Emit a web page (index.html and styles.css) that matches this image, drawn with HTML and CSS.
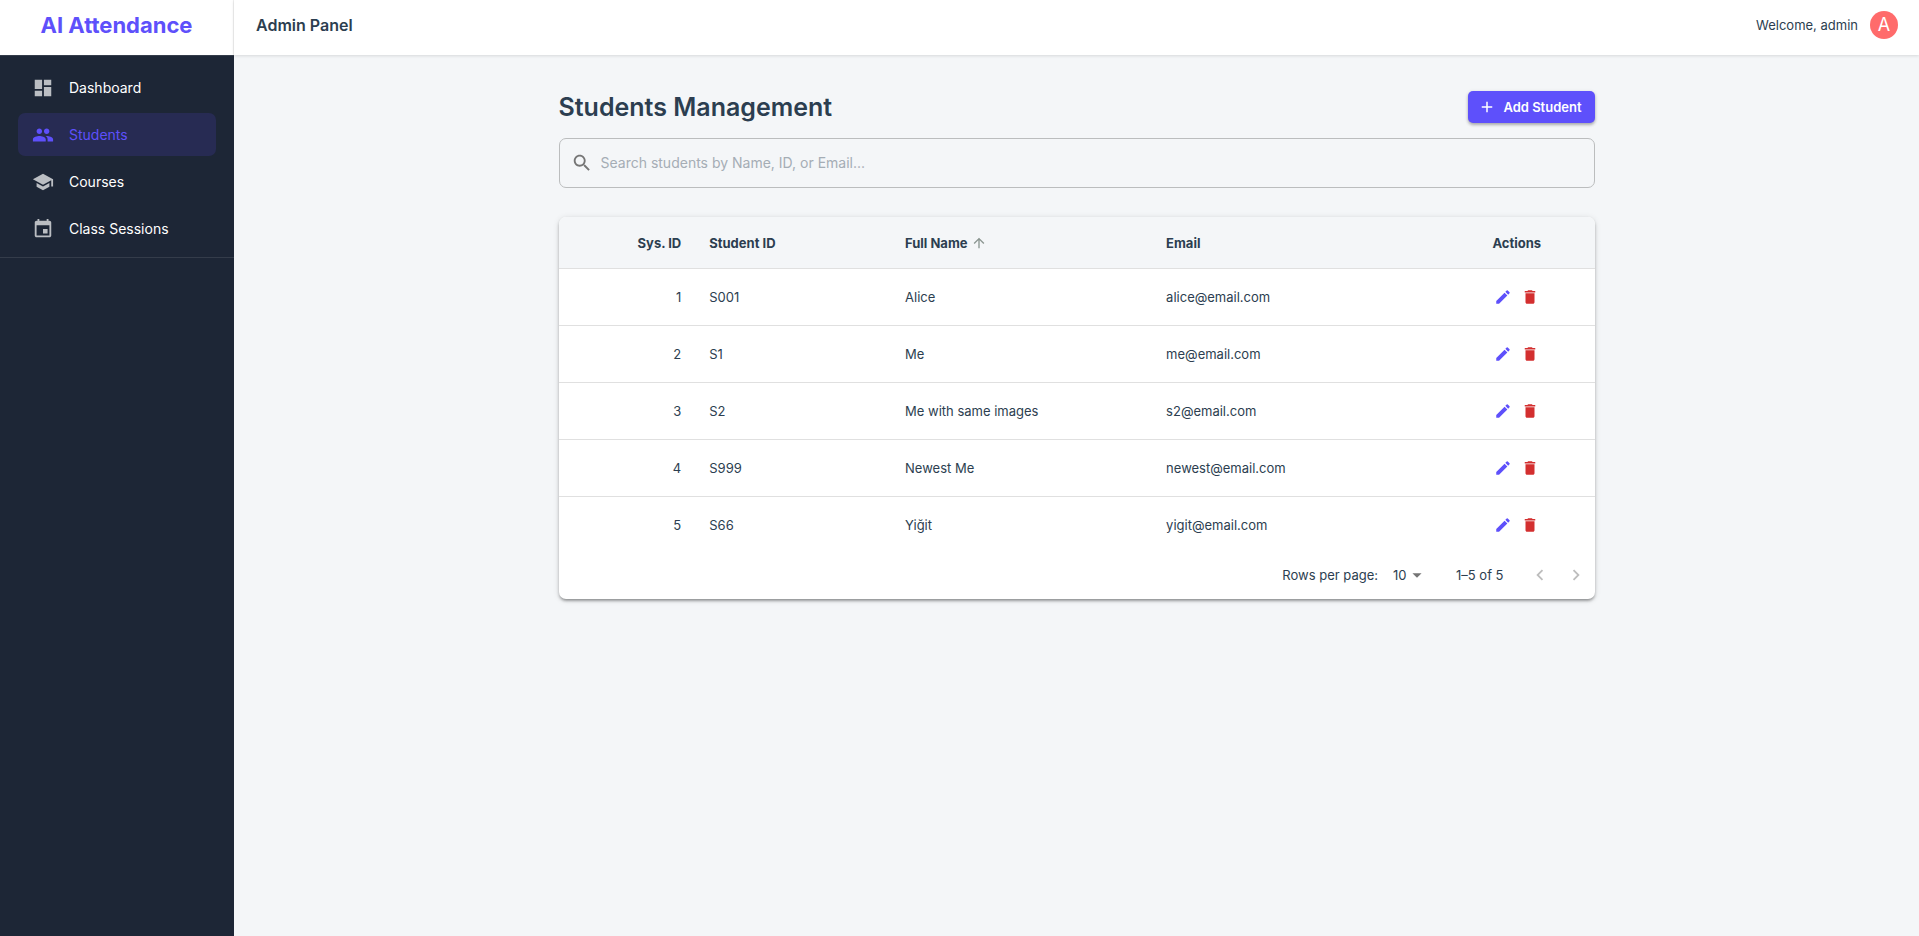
FILE: index.html
```html
<!DOCTYPE html>
<html lang="en">
<head>
<meta charset="utf-8">
<title>AI Attendance</title>
<link rel="stylesheet" href="styles.css">
</head>
<body>
<svg class="sprite" aria-hidden="true">
  <symbol id="i-dashboard" viewBox="0 0 24 24"><path d="M3 13h8V3H3v10zm0 8h8v-6H3v6zm10 0h8V11h-8v10zm0-18v6h8V3h-8z"/></symbol>
  <symbol id="i-people" viewBox="0 0 24 24"><path d="M16 11c1.66 0 2.99-1.34 2.99-3S17.66 5 16 5c-1.66 0-3 1.34-3 3s1.34 3 3 3zm-8 0c1.66 0 2.99-1.34 2.99-3S9.66 5 8 5C6.34 5 5 6.34 5 8s1.34 3 3 3zm0 2c-2.33 0-7 1.17-7 3.5V19h14v-2.5c0-2.33-4.67-3.5-7-3.5zm8 0c-.29 0-.62.02-.97.05 1.16.84 1.97 1.97 1.97 3.45V19h6v-2.5c0-2.33-4.67-3.5-7-3.5z"/></symbol>
  <symbol id="i-school" viewBox="0 0 24 24"><path d="M5 13.18v4L12 21l7-3.82v-4L12 17l-7-3.82zM12 3 1 9l11 6 9-4.91V17h2V9L12 3z"/></symbol>
  <symbol id="i-event" viewBox="0 0 24 24"><path d="M17 12h-5v5h5v-5zM16 1v2H8V1H6v2H5c-1.11 0-1.99.9-1.99 2L3 19c0 1.1.89 2 2 2h14c1.1 0 2-.9 2-2V5c0-1.1-.9-2-2-2h-1V1h-2zm3 18H5V8h14v11z"/></symbol>
  <symbol id="i-search" viewBox="0 0 24 24"><path d="M15.5 14h-.79l-.28-.27C15.41 12.59 16 11.11 16 9.5 16 5.91 13.09 3 9.5 3S3 5.91 3 9.5 5.91 16 9.5 16c1.61 0 3.09-.59 4.23-1.57l.27.28v.79l5 4.99L20.49 19l-4.99-5zm-6 0C7.01 14 5 11.99 5 9.5S7.01 5 9.5 5 14 7.01 14 9.5 11.99 14 9.5 14z"/></symbol>
  <symbol id="i-add" viewBox="0 0 24 24"><path d="M19 13h-6v6h-2v-6H5v-2h6V5h2v6h6v2z"/></symbol>
  <symbol id="i-up" viewBox="0 0 24 24"><path d="M4 12l1.41 1.41L11 7.83V20h2V7.83l5.58 5.59L20 12l-8-8-8 8z"/></symbol>
  <symbol id="i-edit" viewBox="0 0 24 24"><path d="M3 17.25V21h3.75L17.81 9.94l-3.75-3.75L3 17.25zM20.71 7.04c.39-.39.39-1.02 0-1.41l-2.34-2.34a.9959.9959 0 0 0-1.41 0l-1.83 1.83 3.75 3.75 1.83-1.83z"/></symbol>
  <symbol id="i-delete" viewBox="0 0 24 24"><path d="M6 19c0 1.1.9 2 2 2h8c1.1 0 2-.9 2-2V7H6v12zM19 4h-3.5l-1-1h-5l-1 1H5v2h14V4z"/></symbol>
  <symbol id="i-drop" viewBox="0 0 24 24"><path d="M7 10l5 5 5-5z"/></symbol>
  <symbol id="i-left" viewBox="0 0 24 24"><path d="M15.41 16.59L10.83 12l4.58-4.59L14 6l-6 6 6 6z"/></symbol>
  <symbol id="i-right" viewBox="0 0 24 24"><path d="M8.59 16.59L13.17 12 8.59 7.41 10 6l6 6-6 6z"/></symbol>
</svg>
<div class="app">
  <aside class="sidebar">
    <div class="brand">AI Attendance</div>
    <nav class="nav">
      <a class="nav-item" href="#"><svg class="icon"><use href="#i-dashboard"/></svg>Dashboard</a>
      <a class="nav-item active" href="#" aria-current="page"><svg class="icon"><use href="#i-people"/></svg>Students</a>
      <a class="nav-item" href="#"><svg class="icon"><use href="#i-school"/></svg>Courses</a>
      <a class="nav-item" href="#"><svg class="icon"><use href="#i-event"/></svg>Class Sessions</a>
    </nav>
  </aside>
  <div class="page">
    <header class="topbar">
      <div class="topbar-title">Admin Panel</div>
      <div class="user"><span>Welcome, admin</span><span class="avatar">A</span></div>
    </header>
    <main class="content">
      <div class="heading">
        <h1>Students Management</h1>
        <button class="add" type="button"><svg class="icon-add"><use href="#i-add"/></svg>Add Student</button>
      </div>
      <label class="search">
        <svg class="icon"><use href="#i-search"/></svg>
        <input type="text" aria-label="Search students" placeholder="Search students by Name, ID, or Email...">
      </label>
      <section class="card">
        <table>
          <colgroup><col class="c-sys"><col class="c-id"><col class="c-name"><col class="c-email"><col class="c-actions"></colgroup>
          <thead>
            <tr><th class="num">Sys. ID</th><th>Student ID</th><th aria-sort="ascending"><button class="sort" type="button">Full Name<svg class="icon-sm"><use href="#i-up"/></svg></button></th><th>Email</th><th class="mid">Actions</th></tr>
          </thead>
          <tbody>
            <tr><td class="num">1</td><td>S001</td><td>Alice</td><td>alice@email.com</td><td><div class="actions"><button class="act edit" type="button" aria-label="Edit"><svg class="icon-act"><use href="#i-edit"/></svg></button><button class="act delete" type="button" aria-label="Delete"><svg class="icon-act"><use href="#i-delete"/></svg></button></div></td></tr>
            <tr><td class="num">2</td><td>S1</td><td>Me</td><td>me@email.com</td><td><div class="actions"><button class="act edit" type="button" aria-label="Edit"><svg class="icon-act"><use href="#i-edit"/></svg></button><button class="act delete" type="button" aria-label="Delete"><svg class="icon-act"><use href="#i-delete"/></svg></button></div></td></tr>
            <tr><td class="num">3</td><td>S2</td><td>Me with same images</td><td>s2@email.com</td><td><div class="actions"><button class="act edit" type="button" aria-label="Edit"><svg class="icon-act"><use href="#i-edit"/></svg></button><button class="act delete" type="button" aria-label="Delete"><svg class="icon-act"><use href="#i-delete"/></svg></button></div></td></tr>
            <tr><td class="num">4</td><td>S999</td><td>Newest Me</td><td>newest@email.com</td><td><div class="actions"><button class="act edit" type="button" aria-label="Edit"><svg class="icon-act"><use href="#i-edit"/></svg></button><button class="act delete" type="button" aria-label="Delete"><svg class="icon-act"><use href="#i-delete"/></svg></button></div></td></tr>
            <tr><td class="num">5</td><td>S66</td><td>Yiğit</td><td>yigit@email.com</td><td><div class="actions"><button class="act edit" type="button" aria-label="Edit"><svg class="icon-act"><use href="#i-edit"/></svg></button><button class="act delete" type="button" aria-label="Delete"><svg class="icon-act"><use href="#i-delete"/></svg></button></div></td></tr>
          </tbody>
        </table>
        <div class="pager">
          <label for="rows">Rows per page:</label>
          <div class="select"><select id="rows"><option>10</option><option>25</option><option>50</option></select><svg class="icon"><use href="#i-drop"/></svg></div>
          <span class="range">1–5 of 5</span>
          <div class="pages">
            <button class="page-btn" type="button" aria-label="Previous page" disabled><svg class="icon"><use href="#i-left"/></svg></button>
            <button class="page-btn" type="button" aria-label="Next page" disabled><svg class="icon"><use href="#i-right"/></svg></button>
          </div>
        </div>
      </section>
    </main>
  </div>
</div>
</body>
</html>
```

FILE: styles.css
```css
:root {
  --primary: #5e50fb;
  --text: #2c3e50;
  --bg: #f4f6f8;
  --line: #e0e0e0;
}
* { box-sizing: border-box; }
body {
  margin: 0;
  background: var(--bg);
  color: var(--text);
  font: 13px/20px Inter, "Liberation Sans", sans-serif;
}
button, input, select { font: inherit; color: inherit; }
button { border: 0; padding: 0; background: none; cursor: pointer; }
svg { display: block; flex: none; fill: currentColor; }
.sprite { display: none; }
.icon { width: 22px; height: 22px; }
.icon-add, .icon-act { width: 18px; height: 18px; }
.icon-sm { width: 16px; height: 16px; }

.app { display: flex; min-height: 100vh; }

.sidebar { flex: none; width: 234px; background: #1d2636; color: #fff; }
.brand {
  display: flex;
  align-items: center;
  justify-content: center;
  height: 55px;
  padding-bottom: 5px;
  background: #fff;
  border-right: 1px solid #f0f0f0;
  color: var(--primary);
  font-size: 22px;
  font-weight: 700;
}
.nav {
  display: flex;
  flex-direction: column;
  gap: 4px;
  padding: 10px 18px 7px;
  border-top: 1px solid #343c4a;
  border-bottom: 1px solid #343c4a;
}
.nav-item {
  display: flex;
  align-items: center;
  gap: 15px;
  height: 43px;
  padding: 0 14px;
  border-radius: 7px;
  color: #fff;
  font-size: 14px;
  text-decoration: none;
}
.nav-item .icon { color: #bbbec3; }
.nav-item.active { background: #272b53; color: var(--primary); }
.nav-item.active .icon { color: var(--primary); }

.page { flex: 1; min-width: 0; }
.topbar {
  display: flex;
  align-items: center;
  justify-content: space-between;
  height: 55px;
  padding: 0 21px 5px 22px;
  background: #fff;
  box-shadow: 0 1px 3px rgba(0, 0, 0, .12);
}
.topbar-title { font-size: 16px; font-weight: 600; }
.user { display: flex; align-items: center; gap: 12px; }
.avatar {
  display: grid;
  place-items: center;
  width: 28px;
  height: 28px;
  border-radius: 50%;
  background: #ff6b6b;
  color: #fff;
  font-size: 18px;
}

.content { max-width: 1080px; margin: 0 auto; padding: 36px 22px; }
.heading { display: flex; align-items: center; justify-content: space-between; }
h1 { margin: 0; font-size: 25px; line-height: 32px; font-weight: 600; }
.add {
  display: flex;
  align-items: center;
  gap: 7px;
  height: 32px;
  padding: 0 13px 0 10px;
  border-radius: 5px;
  background: var(--primary);
  color: #fff;
  font-weight: 600;
  box-shadow: 0 2px 3px rgba(0, 0, 0, .24), 0 1px 4px rgba(0, 0, 0, .12);
}
.search {
  display: flex;
  align-items: center;
  gap: 8px;
  height: 50px;
  margin: 15px 0 29px;
  padding: 0 12px 0 11px;
  border: 1px solid #bbbdbe;
  border-radius: 7px;
}
.search .icon { color: #757575; }
.search input {
  flex: 1;
  padding: 0;
  border: 0;
  outline: 0;
  background: none;
  font-size: 14px;
}
.search input::placeholder { color: #a5adb5; opacity: 1; }

.card {
  overflow: hidden;
  background: #fff;
  border-radius: 7px;
  box-shadow: 0 3px 3px -2px rgba(0, 0, 0, .2), 0 2px 3px rgba(0, 0, 0, .24), 0 1px 6px rgba(0, 0, 0, .12);
}
table { width: 100%; border-collapse: separate; border-spacing: 0; table-layout: fixed; }
.c-sys { width: 13.2%; }
.c-id { width: 18.9%; }
.c-name { width: 25.2%; }
.c-email { width: 27.7%; }
.c-actions { width: 15%; }
th, td { padding: 0 14px; border-bottom: 1px solid var(--line); text-align: left; }
th { height: 52px; background: var(--bg); font-weight: 700; }
td { height: 57px; }
tbody tr:last-child td { height: 56px; border-bottom: 0; }
.num { text-align: right; }
.mid { text-align: center; }
.sort { display: flex; align-items: center; gap: 3px; font-weight: 700; }
.sort .icon-sm { color: #8b9691; }
.actions { display: flex; justify-content: center; gap: 1px; }
.act { padding: 5px 4px; }
.act.edit { color: var(--primary); }
.act.delete { color: #d32f2f; }

.pager { display: flex; align-items: center; justify-content: flex-end; height: 46px; padding: 0 1px 2px 0; }
.select { position: relative; margin: 0 28px 0 8px; }
.select select {
  width: 42px;
  height: 24px;
  padding: 0 18px 0 7px;
  border: 0;
  background: none;
  appearance: none;
}
.select .icon { position: absolute; top: 1px; right: 0; color: #757575; pointer-events: none; }
.range { margin-right: 18px; }
.pages { display: flex; }
.page-btn { padding: 7px; color: #bdbdbd; }
```
